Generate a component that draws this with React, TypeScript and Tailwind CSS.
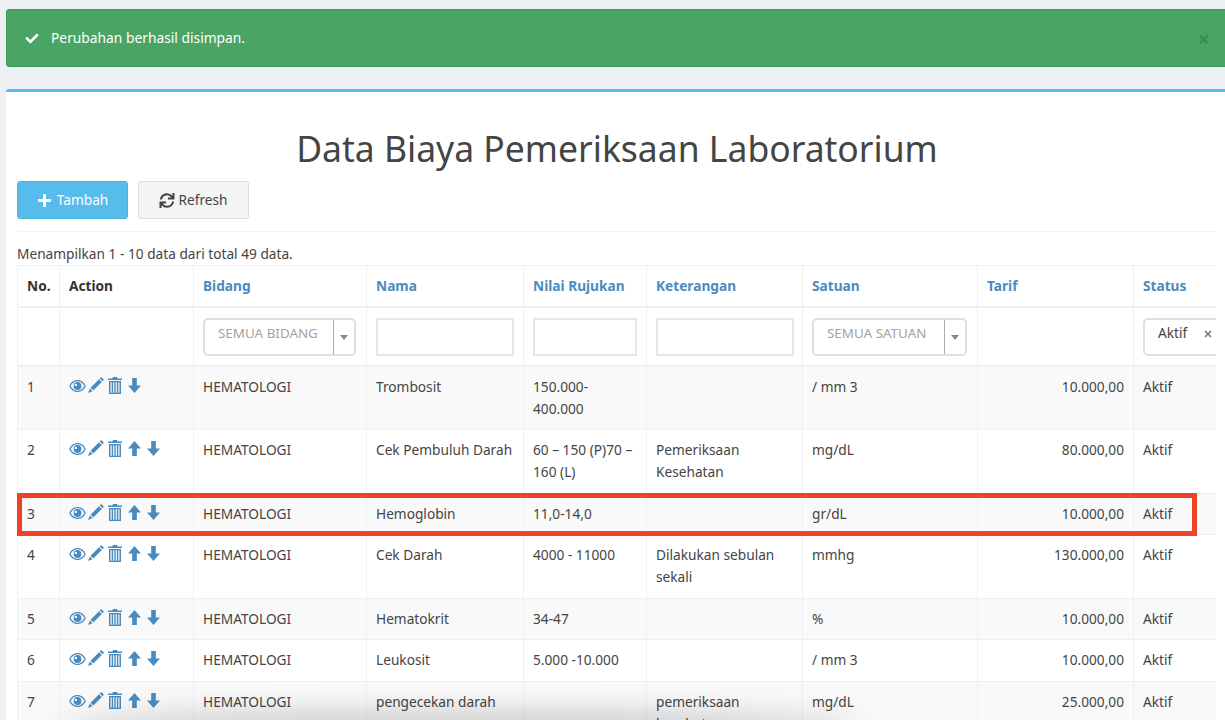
import { FaCheck, FaPlus, FaSync, FaTimes } from "react-icons/fa";

const font = { fontFamily: '"Noto Sans", sans-serif' };

interface Row {
  no: number;
  nama: string;
  rujukan: string;
  ket: string;
  satuan: string;
  tarif: string;
}

const rows: Row[] = [
  { no: 1, nama: "Trombosit", rujukan: "150.000-400.000", ket: "", satuan: "/ mm 3", tarif: "10.000,00" },
  { no: 2, nama: "Cek Pembuluh Darah", rujukan: "60 – 150 (P)70 – 160 (L)", ket: "Pemeriksaan Kesehatan", satuan: "mg/dL", tarif: "80.000,00" },
  { no: 3, nama: "Hemoglobin", rujukan: "11,0-14,0", ket: "", satuan: "gr/dL", tarif: "10.000,00" },
  { no: 4, nama: "Cek Darah", rujukan: "4000 - 11000", ket: "Dilakukan sebulan sekali", satuan: "mmhg", tarif: "130.000,00" },
  { no: 5, nama: "Hematokrit", rujukan: "34-47", ket: "", satuan: "%", tarif: "10.000,00" },
  { no: 6, nama: "Leukosit", rujukan: "5.000 -10.000", ket: "", satuan: "/ mm 3", tarif: "10.000,00" },
  { no: 7, nama: "pengecekan darah", rujukan: "", ket: "pemeriksaan kesehatan", satuan: "mg/dL", tarif: "25.000,00" },
];

const Eye = () => (
  <svg viewBox="0 0 18 13" className="mt-[3px] h-[12px] w-[17px] fill-[#4a8bbf]">
    <path fillRule="evenodd" d="M9 0c4 0 7.300 2.500 9 6.500-1.700 4-5 6.500-9 6.500s-7.300-2.500-9-6.500C1.700 2.500 5 0 9 0zM9 1.300C6 1.300 3.200 3.300 1.500 6.500 3.200 9.700 6 11.700 9 11.700s5.800-2 7.500-5.200C14.800 3.300 12 1.300 9 1.300zM9 2.300a4.200 4.200 0 1 1 0 8.400 4.200 4.200 0 0 1 0-8.400zM7.200 4a1.300 1.300 0 1 0 0 2.600 1.300 1.300 0 0 0 0-2.600z" />
  </svg>
);

const Pencil = () => (
  <svg viewBox="0 0 16 16" className="ml-[2px] h-[16px] w-[16px] fill-[#4a8bbf]">
    <path d="M13.200 0L16 2.800l-1.500 1.500-2.800-2.800zM11 2.200L13.800 5l-8.500 8.500-2.800-2.800zM1.800 11.500l2.700 2.700L0 16z" />
  </svg>
);

const Trash = () => (
  <svg viewBox="0 0 14 17" className="ml-[4px] h-[17px] w-[14px] fill-[#4a8bbf]">
    <path fillRule="evenodd" d="M5 0h4l.6 1.500H14V3H0V1.500h4.400zM1 4h12v13H1zM2.500 5.300v10.400h1.200V5.300zm2.600 0v10.400h1.200V5.300zm2.600 0v10.400h1.200V5.300zm2.600 0v10.400h1.200V5.300z" />
  </svg>
);

const ArrowDown = () => (
  <svg viewBox="0 0 14 16" className="mt-[1px] h-[15px] w-[13px] fill-[#4a8bbf]">
    <path d="M4.500 0h5v8H14l-7 8-7-8h4.500z" />
  </svg>
);

const ArrowUp = () => (
  <svg viewBox="0 0 14 16" className="mt-[1px] h-[15px] w-[13px] fill-[#4a8bbf]">
    <path d="M4.500 16h5V8H14L7 0 0 8h4.500z" />
  </svg>
);

function Actions({ first }: { first: boolean }) {
  return (
    <div className="mt-[1px] flex items-start">
      <Eye />
      <Pencil />
      <Trash />
      {!first && <span className="ml-[6px] flex"><ArrowUp /></span>}
      <span className="ml-[6px] flex"><ArrowDown /></span>
    </div>
  );
}

function SelectBox({ label, width }: { label: string; width: string }) {
  return (
    <div className={`flex h-[38px] rounded-[5px] border-2 border-[#dfdfe3] bg-white ${width}`}>
      <div className="flex-1 whitespace-nowrap pl-[13px] pt-[2px] text-[13.4px] text-[#a3a3a3]">{label}</div>
      <div className="flex w-[21px] items-center justify-center border-l border-[#aaaaaa]">
        <div className="mt-[2px] border-x-[4px] border-t-[5px] border-x-transparent border-t-[#888888]" />
      </div>
    </div>
  );
}

const th = "border-r border-[#f0f0f0] pl-[9px] pr-[9px] h-[41px] text-left text-[13.7px] font-bold align-middle";
const td = "border-r border-[#f0f0f0] pl-[9px] pr-[9px] pt-[9px] pb-[9.5px] align-top";
const filterTd = "border-r border-[#f0f0f0] px-[9px] pt-[10px] pb-[9px] align-top";

export default function App() {
  return (
    <div className="relative h-[720px] w-[1225px] overflow-hidden bg-[#ecf0f5] pl-[6px] pt-[9px] text-[13.7px] leading-[22px] text-[#444444]" style={font}>
      <div className="flex h-[58px] w-[1225px] items-center rounded-[3px] border border-[#439a5e] bg-[#4aa463] pl-[18px] text-white">
        <FaCheck className="h-[13px] w-[14px]" />
        <span className="ml-[12px] text-[13.8px]">Perubahan berhasil disimpan.</span>
        <FaTimes className="absolute left-[1197px] top-[33px] h-[13px] w-[13px] text-[#3d8a55]" />
      </div>

      <div className="mt-[22px] h-[640px] w-[1225px] rounded-t-[3px] border-t-[3px] border-[#57bcec] bg-white pl-[11px]">
        <h1 className="w-[1200px] pt-[31px] text-center text-[35.5px] leading-[50px] text-[#444444]">Data Biaya Pemeriksaan Laboratorium</h1>

        <div className="mt-[8px] flex w-[1200px] gap-[10px] border-b border-[#f4f4f4] pb-[12px]">
          <button className="flex h-[38px] w-[111px] items-center justify-center gap-[5px] rounded-[3px] border border-[#46b8da] bg-[#57bcec] text-white">
            <FaPlus className="h-[15px] w-[15px]" /> Tambah
          </button>
          <button className="flex h-[38px] w-[111px] items-center justify-center gap-[3px] rounded-[3px] border border-[#dddddd] bg-[#f4f4f4] text-[#444444]">
            <FaSync className="h-[15px] w-[16px]" /> Refresh
          </button>
        </div>

        <p className="mt-[11px] h-[22px]">Menampilkan 1 - 10 data dari total 49 data.</p>

        <div className="w-[1199px] overflow-hidden">
          <table className="w-[1300px] table-fixed border-collapse border-t border-[#f0f0f0]">
            <colgroup>
              <col className="w-[42px]" />
              <col className="w-[134px]" />
              <col className="w-[173px]" />
              <col className="w-[157px]" />
              <col className="w-[123px]" />
              <col className="w-[156px]" />
              <col className="w-[175px]" />
              <col className="w-[156px]" />
              <col className="w-[184px]" />
            </colgroup>
            <thead>
              <tr className="border-b-2 border-[#f0f0f0]">
                <th className={`${th} border-l text-[#333333]`}>No.</th>
                <th className={`${th} text-[#333333]`}>Action</th>
                <th className={`${th} text-[#4a8bbf]`}>Bidang</th>
                <th className={`${th} text-[#4a8bbf]`}>Nama</th>
                <th className={`${th} text-[#4a8bbf]`}>Nilai Rujukan</th>
                <th className={`${th} text-[#4a8bbf]`}>Keterangan</th>
                <th className={`${th} text-[#4a8bbf]`}>Satuan</th>
                <th className={`${th} text-[#4a8bbf]`}>Tarif</th>
                <th className={`${th} text-[#4a8bbf]`}>Status</th>
              </tr>
              <tr className="border-b-2 border-[#f0f0f0]">
                <td className={`${filterTd} border-l`} />
                <td className={filterTd} />
                <td className={filterTd}><SelectBox label="SEMUA BIDANG" width="w-[153px]" /></td>
                <td className={filterTd}><div className="h-[38px] w-[138px] border-2 border-[#e6e6ec]" /></td>
                <td className={filterTd}><div className="h-[38px] w-[104px] border-2 border-[#e6e6ec]" /></td>
                <td className={filterTd}><div className="h-[38px] w-[138px] border-2 border-[#e6e6ec]" /></td>
                <td className={filterTd}><SelectBox label="SEMUA SATUAN" width="w-[155px]" /></td>
                <td className={filterTd} />
                <td className={filterTd}>
                  <div className="flex h-[38px] w-[120px] rounded-[5px] border-2 border-[#dfdfe3] pl-[13px] pt-[2px]">
                    Aktif
                    <FaTimes className="ml-[16px] mt-[7px] h-[10px] w-[10px] text-[#888888]" />
                  </div>
                </td>
              </tr>
            </thead>
            <tbody>
              {rows.map((r) => (
                <tr key={r.no} className={`border-b border-[#f0f0f0] ${r.no % 2 === 1 ? "bg-[#f9f9f9]" : "bg-white"}`}>
                  <td className={`${td} border-l`}>{r.no}</td>
                  <td className={td}><Actions first={r.no === 1} /></td>
                  <td className={td}>HEMATOLOGI</td>
                  <td className={td}>{r.nama}</td>
                  <td className={td}>{r.rujukan}</td>
                  <td className={td}>{r.ket}</td>
                  <td className={td}>{r.satuan}</td>
                  <td className={`${td} text-right`}>{r.tarif}</td>
                  <td className={td}>Aktif</td>
                </tr>
              ))}
            </tbody>
          </table>
        </div>
      </div>

      {/* red annotation drawn over row 3 */}
      <div className="absolute left-[17px] top-[493px] h-[43px] w-[1180px] border-[5px] border-[#ee4327]" />
      {/* soft shadow at the bottom edge */}
      <div className="pointer-events-none absolute bottom-[-20px] left-[60px] h-[28px] w-[800px] rounded-[50%] bg-black/20 blur-[14px]" />
    </div>
  );
}
